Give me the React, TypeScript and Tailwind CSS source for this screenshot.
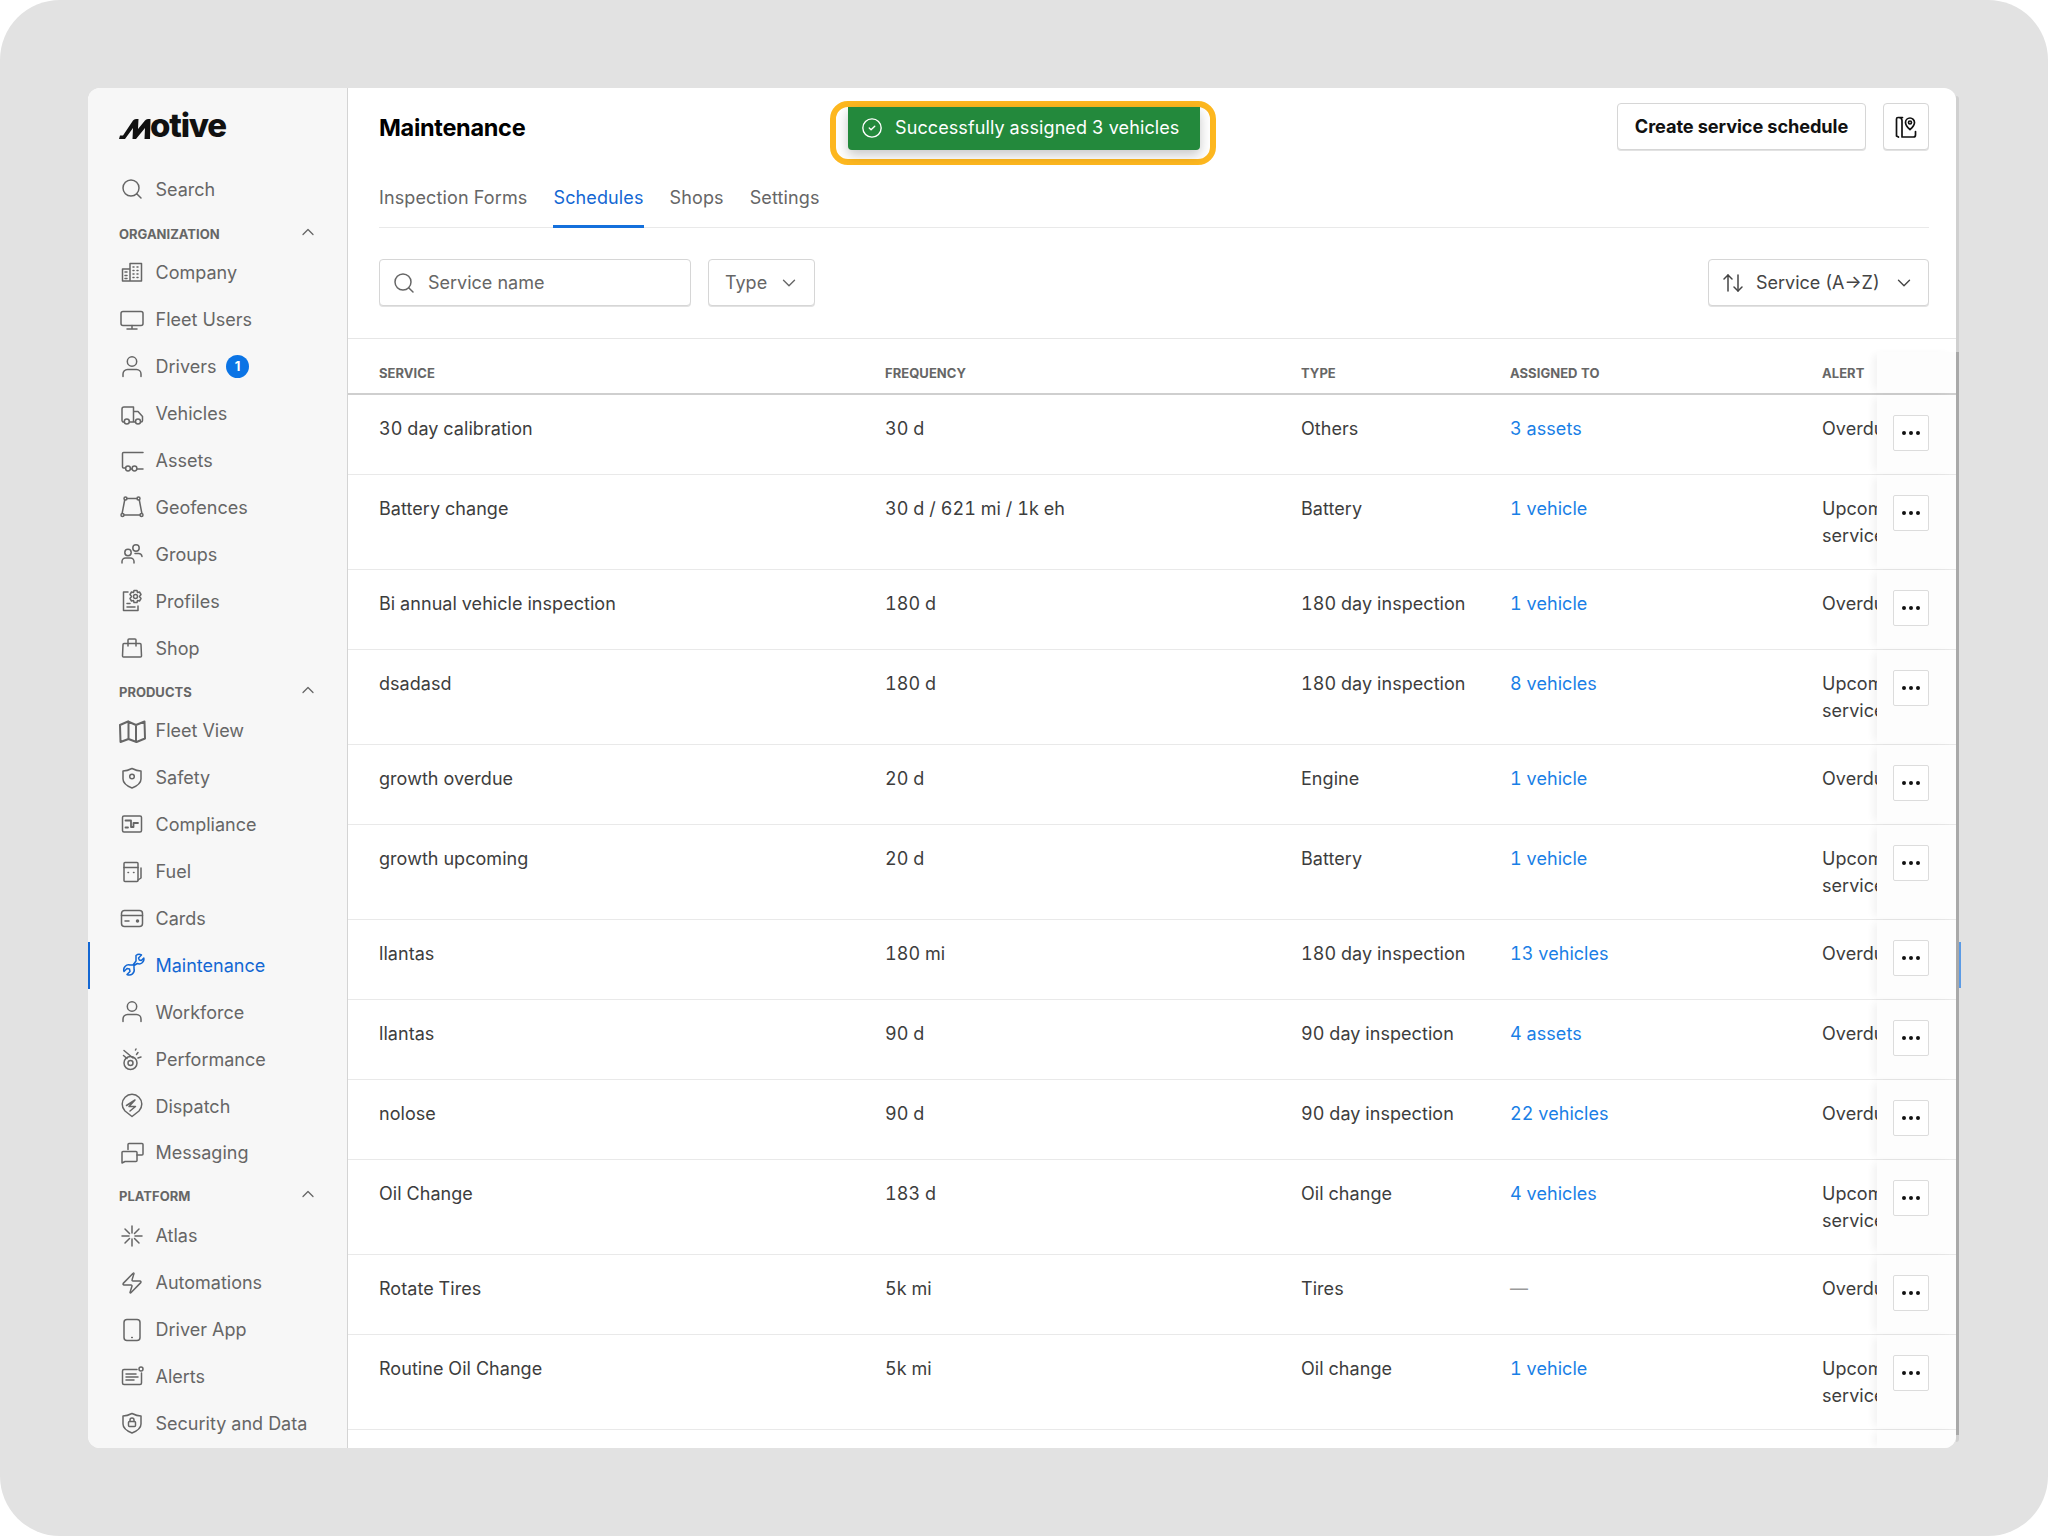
import React from 'react';
import { ArrowUpDown, ChevronDown, ChevronUp, CircleCheck, Ellipsis, Search, Zap } from 'lucide-react';

type IconName = keyof typeof iconPaths;

// Sidebar icons drawn on a 24 box, stroked in the current colour
const iconPaths = {
  company: (
    <>
      <path d="M2.5 20V8h7.5M10 20V2.5h11.5V20ZM2.5 20H21.5" />
      <path d="M5 11h2M5 14.500h2M5 17.500h2M13 6h1M17 6h1M13 9.500h1M17 9.500h1M13 13h1M17 13h1M13 16.500h1M17 16.500h1" />
    </>
  ),
  monitor: (
    <>
      <rect x="1" y="3.500" width="22" height="14" rx="2" />
      <path d="M12 17.500v3M7 21h10" />
    </>
  ),
  user: (
    <>
      <circle cx="12" cy="6.500" r="4.700" />
      <path d="M3 21.500v-2.500a4.500 4.500 0 0 1 4.500-4.500h9a4.500 4.500 0 0 1 4.500 4.500v2.500" />
    </>
  ),
  truck: (
    <>
      <path d="M3.800 20H3a2 2 0 0 1-1-1.500V7a2 2 0 0 1 2-2h9.500v15M9.500 20h5.500M13.500 9.500h4.500l4.500 5v4a1.500 1.500 0 0 1-1.500 1.500" />
      <circle cx="6.800" cy="19.500" r="2.500" />
      <circle cx="18" cy="19.500" r="2.500" />
    </>
  ),
  trailer: (
    <>
      <path d="M23 3.500H3.500a1 1 0 0 0-1 1V18a1 1 0 0 0 1 1h2M10.500 20h1.500M17 20h6" />
      <circle cx="8" cy="19.500" r="2.400" />
      <circle cx="14.500" cy="19.500" r="2.400" />
    </>
  ),
  geofence: (
    <>
      <path d="M6.800 3.500h10.400M19.300 5 21.800 18M4.700 5 2.200 18M4.200 20h15.600" />
      <circle cx="5.500" cy="3.500" r="1.500" />
      <circle cx="18.500" cy="3.500" r="1.500" />
      <circle cx="2.500" cy="20" r="1.500" />
      <circle cx="21.500" cy="20" r="1.500" />
    </>
  ),
  groups: (
    <>
      <circle cx="8" cy="10.500" r="3.200" />
      <circle cx="16" cy="6" r="3.200" />
      <path d="M2 21v-1.500A3.500 3.500 0 0 1 5.500 16h5a3.500 3.500 0 0 1 3.500 3.500V21M15 11.500h3.500a3.500 3.500 0 0 1 3.500 3" />
    </>
  ),
  profiles: (
    <>
      <path d="M8 3H3.500v18.500H18V17M7 14.500h3M7 18h8" />
      <circle cx="15.500" cy="7.500" r="2" />
      <path d="M14 1.500h3l.5 2 2-.5 1.500 2.500-1.500 2 1.500 2-1.500 2.500-2-.5-.5 2h-3l-.5-2-2 .5L10 9.500l1.500-2L10 5.500 11.500 3l2 .5Z" />
    </>
  ),
  shop: (
    <>
      <path d="M4 7.500h16a1 1 0 0 1 1 1L21.500 20a1 1 0 0 1-1 1h-17a1 1 0 0 1-1-1L3 8.500a1 1 0 0 1 1-1Z" />
      <path d="M8 10V4a1 1 0 0 1 1-1h6a1 1 0 0 1 1 1v6" />
    </>
  ),
  map: (
    <path d="M0 6 8 2.500 16 6 24.500 2.500 25 19.500 16.500 23 8.500 20 0.500 23ZM8.500 2.500V20M16 6V23" strokeWidth="2" />
  ),
  safety: (
    <>
      <path d="M3 5c3 0 6-1 9-2.500C15 4 18 5 21 5v8c0 4-4 7-9 9-5-2-9-5-9-9Z" />
      <circle cx="12" cy="10.500" r="2.300" />
    </>
  ),
  compliance: (
    <>
      <rect x="2.500" y="3" width="19" height="16" rx="1.500" />
      <path d="M5.500 7.500h5.500v6.500h2.500v-4h4.500M5.500 14.500h2.500" strokeWidth="1.800" />
    </>
  ),
  fuel: (
    <>
      <rect x="4" y="2.500" width="14" height="19" rx="1" />
      <path d="M4 7.500h14M8 12.500h.5M13.500 12.500h.5M21 8v10l-3 2" />
    </>
  ),
  card: (
    <>
      <rect x="1.500" y="3.500" width="21" height="16" rx="3" />
      <path d="M1.500 8.500h21M5 14h4" />
      <circle cx="17.500" cy="14" r="1" fill="currentColor" />
    </>
  ),
  wrench: (
    <path d="M16 2.500a4.800 4.800 0 0 1 5.500-.5l-3 3 .8 2 2 .5 2.500-2.500a4.800 4.800 0 0 1-6.500 5.500L14 12.500v3a5 5 0 0 1-7 6l3-3-.5-2.500-2.500-.5-3 3a5 5 0 0 1 6-6.500h3L16 8Z" />
  ),
  performance: (
    <>
      <circle cx="10.500" cy="16" r="6.500" />
      <circle cx="10.500" cy="16" r="2.500" />
      <path d="M4 3.500 13 11M3.500 8.500l3.500 3M16.500 7.500l1.500-2M18 11l3-1M15.500 3l.500-1" />
    </>
  ),
  dispatch: (
    <>
      <path d="M12 22.500 5 17A9.800 9.800 0 1 1 19 17Z" />
      <path d="M6.500 11.500 15 6 9 12.500h6.500L10 17" />
    </>
  ),
  messaging: (
    <>
      <path d="M8 8.500V3.500a1 1 0 0 1 1-1h13a1 1 0 0 1 1 1V13a1 1 0 0 1-1 1h-5" />
      <path d="M2 11.500a1 1 0 0 1 1-1h13a1 1 0 0 1 1 1v8a1 1 0 0 1-1 1H5L2 22Z" />
    </>
  ),
  atlas: (
    <path d="M12 2v7M12 15v7M2 12h7M15 12h7M5 5l4.500 4.500M14.500 14.500 19 19M19 5l-4.500 4.500M9.500 14.500 5 19" />
  ),
  phone: (
    <>
      <rect x="4" y="1.500" width="16" height="21" rx="3" />
      <path d="M11.700 19.500h.6" />
    </>
  ),
  alerts: (
    <>
      <path d="M17 4.500H4a1.500 1.500 0 0 0-1.500 1.500v12A1.500 1.500 0 0 0 4 19.500h16a1.500 1.500 0 0 0 1.500-1.500V8" />
      <circle cx="21" cy="4" r="2" />
      <path d="M6 9h10M6 12h12M6 15h8" />
    </>
  ),
  security: (
    <>
      <path d="M3 5c3 0 6-1 9-2.500C15 4 18 5 21 5v8c0 4-4 7-9 9-5-2-9-5-9-9Z" />
      <rect x="8.500" y="10.500" width="7" height="5" rx="1" />
      <path d="M10 10.500V9a2 2 0 0 1 4 0v1.500" />
    </>
  ),
};

const SideIcon = ({ name }: { name: IconName }) => (
  <svg width="24" height="24" viewBox="0 0 24 24" fill="none" stroke="currentColor" strokeWidth="1.5" strokeLinecap="round" strokeLinejoin="round" className="shrink-0 overflow-visible">
    {iconPaths[name]}
  </svg>
);

const sections: { title: string; items: { label: string; icon: IconName; badge?: string; active?: boolean }[] }[] = [
  {
    title: 'ORGANIZATION',
    items: [
      { label: 'Company', icon: 'company' },
      { label: 'Fleet Users', icon: 'monitor' },
      { label: 'Drivers', icon: 'user', badge: '1' },
      { label: 'Vehicles', icon: 'truck' },
      { label: 'Assets', icon: 'trailer' },
      { label: 'Geofences', icon: 'geofence' },
      { label: 'Groups', icon: 'groups' },
      { label: 'Profiles', icon: 'profiles' },
      { label: 'Shop', icon: 'shop' },
    ],
  },
  {
    title: 'PRODUCTS',
    items: [
      { label: 'Fleet View', icon: 'map' },
      { label: 'Safety', icon: 'safety' },
      { label: 'Compliance', icon: 'compliance' },
      { label: 'Fuel', icon: 'fuel' },
      { label: 'Cards', icon: 'card' },
      { label: 'Maintenance', icon: 'wrench', active: true },
      { label: 'Workforce', icon: 'user' },
      { label: 'Performance', icon: 'performance' },
      { label: 'Dispatch', icon: 'dispatch' },
      { label: 'Messaging', icon: 'messaging' },
    ],
  },
  {
    title: 'PLATFORM',
    items: [
      { label: 'Atlas', icon: 'atlas' },
      { label: 'Automations', icon: 'atlas' },
      { label: 'Driver App', icon: 'phone' },
      { label: 'Alerts', icon: 'alerts' },
      { label: 'Security and Data', icon: 'security' },
    ],
  },
];

const rows = [
  { service: '30 day calibration', freq: '30 d', type: 'Others', assigned: '3 assets', alert: 'Overdue' },
  { service: 'Battery change', freq: '30 d / 621 mi / 1k eh', type: 'Battery', assigned: '1 vehicle', alert: 'Upcoming service' },
  { service: 'Bi annual vehicle inspection', freq: '180 d', type: '180 day inspection', assigned: '1 vehicle', alert: 'Overdue' },
  { service: 'dsadasd', freq: '180 d', type: '180 day inspection', assigned: '8 vehicles', alert: 'Upcoming service' },
  { service: 'growth overdue', freq: '20 d', type: 'Engine', assigned: '1 vehicle', alert: 'Overdue' },
  { service: 'growth upcoming', freq: '20 d', type: 'Battery', assigned: '1 vehicle', alert: 'Upcoming service' },
  { service: 'llantas', freq: '180 mi', type: '180 day inspection', assigned: '13 vehicles', alert: 'Overdue' },
  { service: 'llantas', freq: '90 d', type: '90 day inspection', assigned: '4 assets', alert: 'Overdue' },
  { service: 'nolose', freq: '90 d', type: '90 day inspection', assigned: '22 vehicles', alert: 'Overdue' },
  { service: 'Oil Change', freq: '183 d', type: 'Oil change', assigned: '4 vehicles', alert: 'Upcoming service' },
  { service: 'Rotate Tires', freq: '5k mi', type: 'Tires', assigned: '', alert: 'Overdue' },
  { service: 'Routine Oil Change', freq: '5k mi', type: 'Oil change', assigned: '1 vehicle', alert: 'Upcoming service' },
];

const Logo = () => (
  <div className="flex items-end h-[26px] text-[#111]">
    <svg width="32" height="20" viewBox="0 0 32 20" className="shrink-0" fill="currentColor">
      <path d="M0 20 1 16.500H4L14 1.500Q15 0 17 0H19.500L19 10 26 1.500Q27 0 29 0H31.500L31 20H25.500L26 9 17 20H13.500L14 9 6 20Z" />
    </svg>
    <span className="text-[33px] leading-[33px] font-extrabold tracking-[-1.2px] -ml-[1px] -mb-[3px]">otive</span>
  </div>
);

const Sidebar = () => (
  <aside className="w-[260px] shrink-0 bg-[#f7f7f7] border-r border-[#d4d4d4] text-[#666666] text-[18px] overflow-hidden">
    <div className="h-[77.500px] pl-[31px] pt-[25px]">
      <Logo />
    </div>
    <div className="h-[48px] pl-[32px] flex items-center gap-[11.500px] pb-[1px]">
      <Search size={24} strokeWidth={1.5} className="shrink-0" />
      <span>Search</span>
    </div>
    {sections.map((s) => (
      <div key={s.title}>
        <div className="h-[36px] pl-[31px] pr-[29px] pt-[12px] flex items-start justify-between">
          <span className="text-[13px] leading-[16px] font-bold text-[#666666]">{s.title}</span>
          <ChevronUp size={20} strokeWidth={1.5} className="-mt-[4px]" />
        </div>
        {s.items.map((it) => (
          <div
            key={it.label}
            className={`h-[46.900px] flex items-center gap-[11.500px] ${it.active ? 'text-[#1367d3] border-l-2 border-[#1367d3] pl-[30px]' : 'pl-[32px]'}`}
          >
            {it.label === 'Automations' ? <Zap size={24} strokeWidth={1.5} className="shrink-0" /> : <SideIcon name={it.icon} />}
            <span>{it.label}</span>
            {it.badge && (
              <span className="w-[23px] h-[23px] rounded-full bg-[#0b74e5] text-white text-[13px] font-bold flex items-center justify-center -ml-[2px]">
                {it.badge}
              </span>
            )}
          </div>
        ))}
      </div>
    ))}
  </aside>
);

const actionCol = 'w-[79px] shrink-0 bg-[#fdfdfd] shadow-[-6px_0_8px_-3px_rgba(0,0,0,0.06)]';

const Table = () => (
  <div className="flex-1 flex flex-col border-t border-[#e6e6e6] text-[18px] leading-[27px] tabular-nums tracking-[0.05px] text-[#3d3d3d] min-h-0 overflow-hidden">
    <div className="flex h-[56px] shrink-0 pl-[31px] border-b-2 border-[#cfcfcf] text-[13px] font-bold text-[#666666]">
      <div className="w-[506px] pt-[21px]">SERVICE</div>
      <div className="w-[416px] pt-[21px]">FREQUENCY</div>
      <div className="w-[209px] pt-[21px]">TYPE</div>
      <div className="w-[312px] pt-[21px]">ASSIGNED TO</div>
      <div className="w-[55px] pt-[21px]">ALERT</div>
      <div className={`${actionCol} mt-[13px]`} />
    </div>
    {rows.map((r, i) => (
      <div key={i} className="flex shrink-0 pl-[31px] border-b border-[#e9e9e9]">
        <div className="w-[506px] pt-[20px]">{r.service}</div>
        <div className="w-[416px] pt-[20px]">{r.freq}</div>
        <div className="w-[209px] pt-[20px]">{r.type}</div>
        <div className="w-[312px] pt-[20px]">
          {r.assigned ? <span className="text-[#1a7fe6]">{r.assigned}</span> : <span className="text-[#9a9a9a]">—</span>}
        </div>
        <div className="w-[55px] py-[20px] overflow-hidden">
          <div className="w-[100px]">{r.alert}</div>
        </div>
        <div className={`${actionCol} pt-[20px] pl-[16px] min-h-[79px]`}>
          <button className="w-[36px] h-[36px] bg-white border border-[#dcdcdc] rounded-[2px] flex items-center justify-center text-[#111]">
            <Ellipsis size={24} strokeWidth={2} />
          </button>
        </div>
      </div>
    ))}
    <div className="flex flex-1 justify-end">
      <div className={actionCol} />
    </div>
  </div>
);

const MapPinBook = () => (
  <svg width="24" height="24" viewBox="0 0 24 24" fill="none" stroke="#111" strokeWidth="1.7" strokeLinejoin="round" strokeLinecap="round">
    <path d="M8.500 2.500H4a1.500 1.500 0 0 0-1.500 1.500v17l2 1M4.500 2.500c2.500 0 3.500 1 3.500 3v16.500M8 22h11.500a2 2 0 0 0 2-2v-3.500" />
    <path d="M16 14.500c-3-2.500-4.500-5-4.500-7a4.500 4.500 0 0 1 9 0c0 2-1.500 4.500-4.500 7Z" />
    <circle cx="16" cy="7.500" r="1.500" />
  </svg>
);

const boxed = 'h-[47px] bg-white border border-[#d6d6d6] rounded-[4px] shadow-[0_1px_0_#e2e2e2]';

export default function App() {
  return (
    <div className="w-[2048px] h-[1536px] bg-white font-['Inter',sans-serif]">
      <div className="w-full h-full bg-[#e2e2e2] rounded-[60px] p-[88px]">
        <div className="relative w-[1868px] h-[1360px]">
          <div className="flex w-full h-full bg-white rounded-[12px] overflow-hidden">
            <Sidebar />
            <main className="relative flex-1 min-w-0 flex flex-col">
              <div className="pl-[31px] pr-[27px] pt-[15px] shrink-0">
                <div className="flex items-center justify-between h-[47px]">
                  <h1 className="text-[23.500px] font-bold tracking-[-0.3px] text-black translate-y-[1px]">Maintenance</h1>
                  <div className="flex gap-[17px]">
                    <button className={`${boxed} w-[249px] text-[18.200px] font-bold tracking-[-0.1px] text-[#111]`}>
                      Create service schedule
                    </button>
                    <button className={`${boxed} w-[46px] flex items-center justify-center`}>
                      <MapPinBook />
                    </button>
                  </div>
                </div>
                <div className="mt-[34px] flex gap-[26px] border-b border-[#e9e9e9] text-[18px] leading-[27px] tracking-[0.12px] text-[#666666]">
                  <span className="pb-[16px]">Inspection Forms</span>
                  <span className="pb-[13px] -mb-px border-b-[3px] border-[#1470dc] text-[#1367d3]">Schedules</span>
                  <span className="pb-[16px]">Shops</span>
                  <span className="pb-[16px]">Settings</span>
                </div>
                <div className="mt-[31px] mb-[32px] flex items-center gap-[17px] text-[18px] text-[#666666]">
                  <div className={`${boxed} w-[312px] flex items-center pl-[12px] gap-[12px]`}>
                    <Search size={24} strokeWidth={1.5} />
                    <span>Service name</span>
                  </div>
                  <div className={`${boxed} w-[107px] flex items-center pl-[16px] gap-[11px]`}>
                    <span>Type</span>
                    <ChevronDown size={22} strokeWidth={1.5} />
                  </div>
                  <div className={`${boxed} ml-auto w-[221px] flex items-center pl-[12px] gap-[11px] text-[#444444]`}>
                    <ArrowUpDown size={24} strokeWidth={1.5} />
                    <span>Service (A→Z)</span>
                    <ChevronDown size={22} strokeWidth={1.5} className="ml-[3px]" />
                  </div>
                </div>
              </div>
              <Table />

              {/* Highlighted toast */}
              <div className="absolute left-[482px] top-[12.500px] w-[386px] h-[64px] border-[6px] border-[#fdb71f] rounded-[18px]">
                <div className="ml-[12px] w-[352px] h-[43px] bg-[#23893c] rounded-b-[4px] shadow-[0_5px_12px_rgba(0,0,0,0.22)] flex items-center pl-[13px] gap-[12px] text-white text-[18px] tracking-[0.1px] tabular-nums">
                  <CircleCheck size={22} strokeWidth={1.5} />
                  <span className="-translate-y-[1px]">Successfully assigned 3 vehicles</span>
                </div>
              </div>
            </main>
          </div>
          {/* Scrollbar track and thumb past the right edge */}
          <div className="absolute left-[1868px] top-[8px] w-[3px] h-[1346px] bg-[#d0d0d0] rounded-r-[3px]" />
          <div className="absolute left-[1868px] top-[264px] w-[3px] h-[1083px] bg-[#a9a9a9]" />
          <div className="absolute left-[1871px] top-[854px] w-[2px] h-[46px] bg-[#5b9be6]" />
        </div>
      </div>
    </div>
  );
}
